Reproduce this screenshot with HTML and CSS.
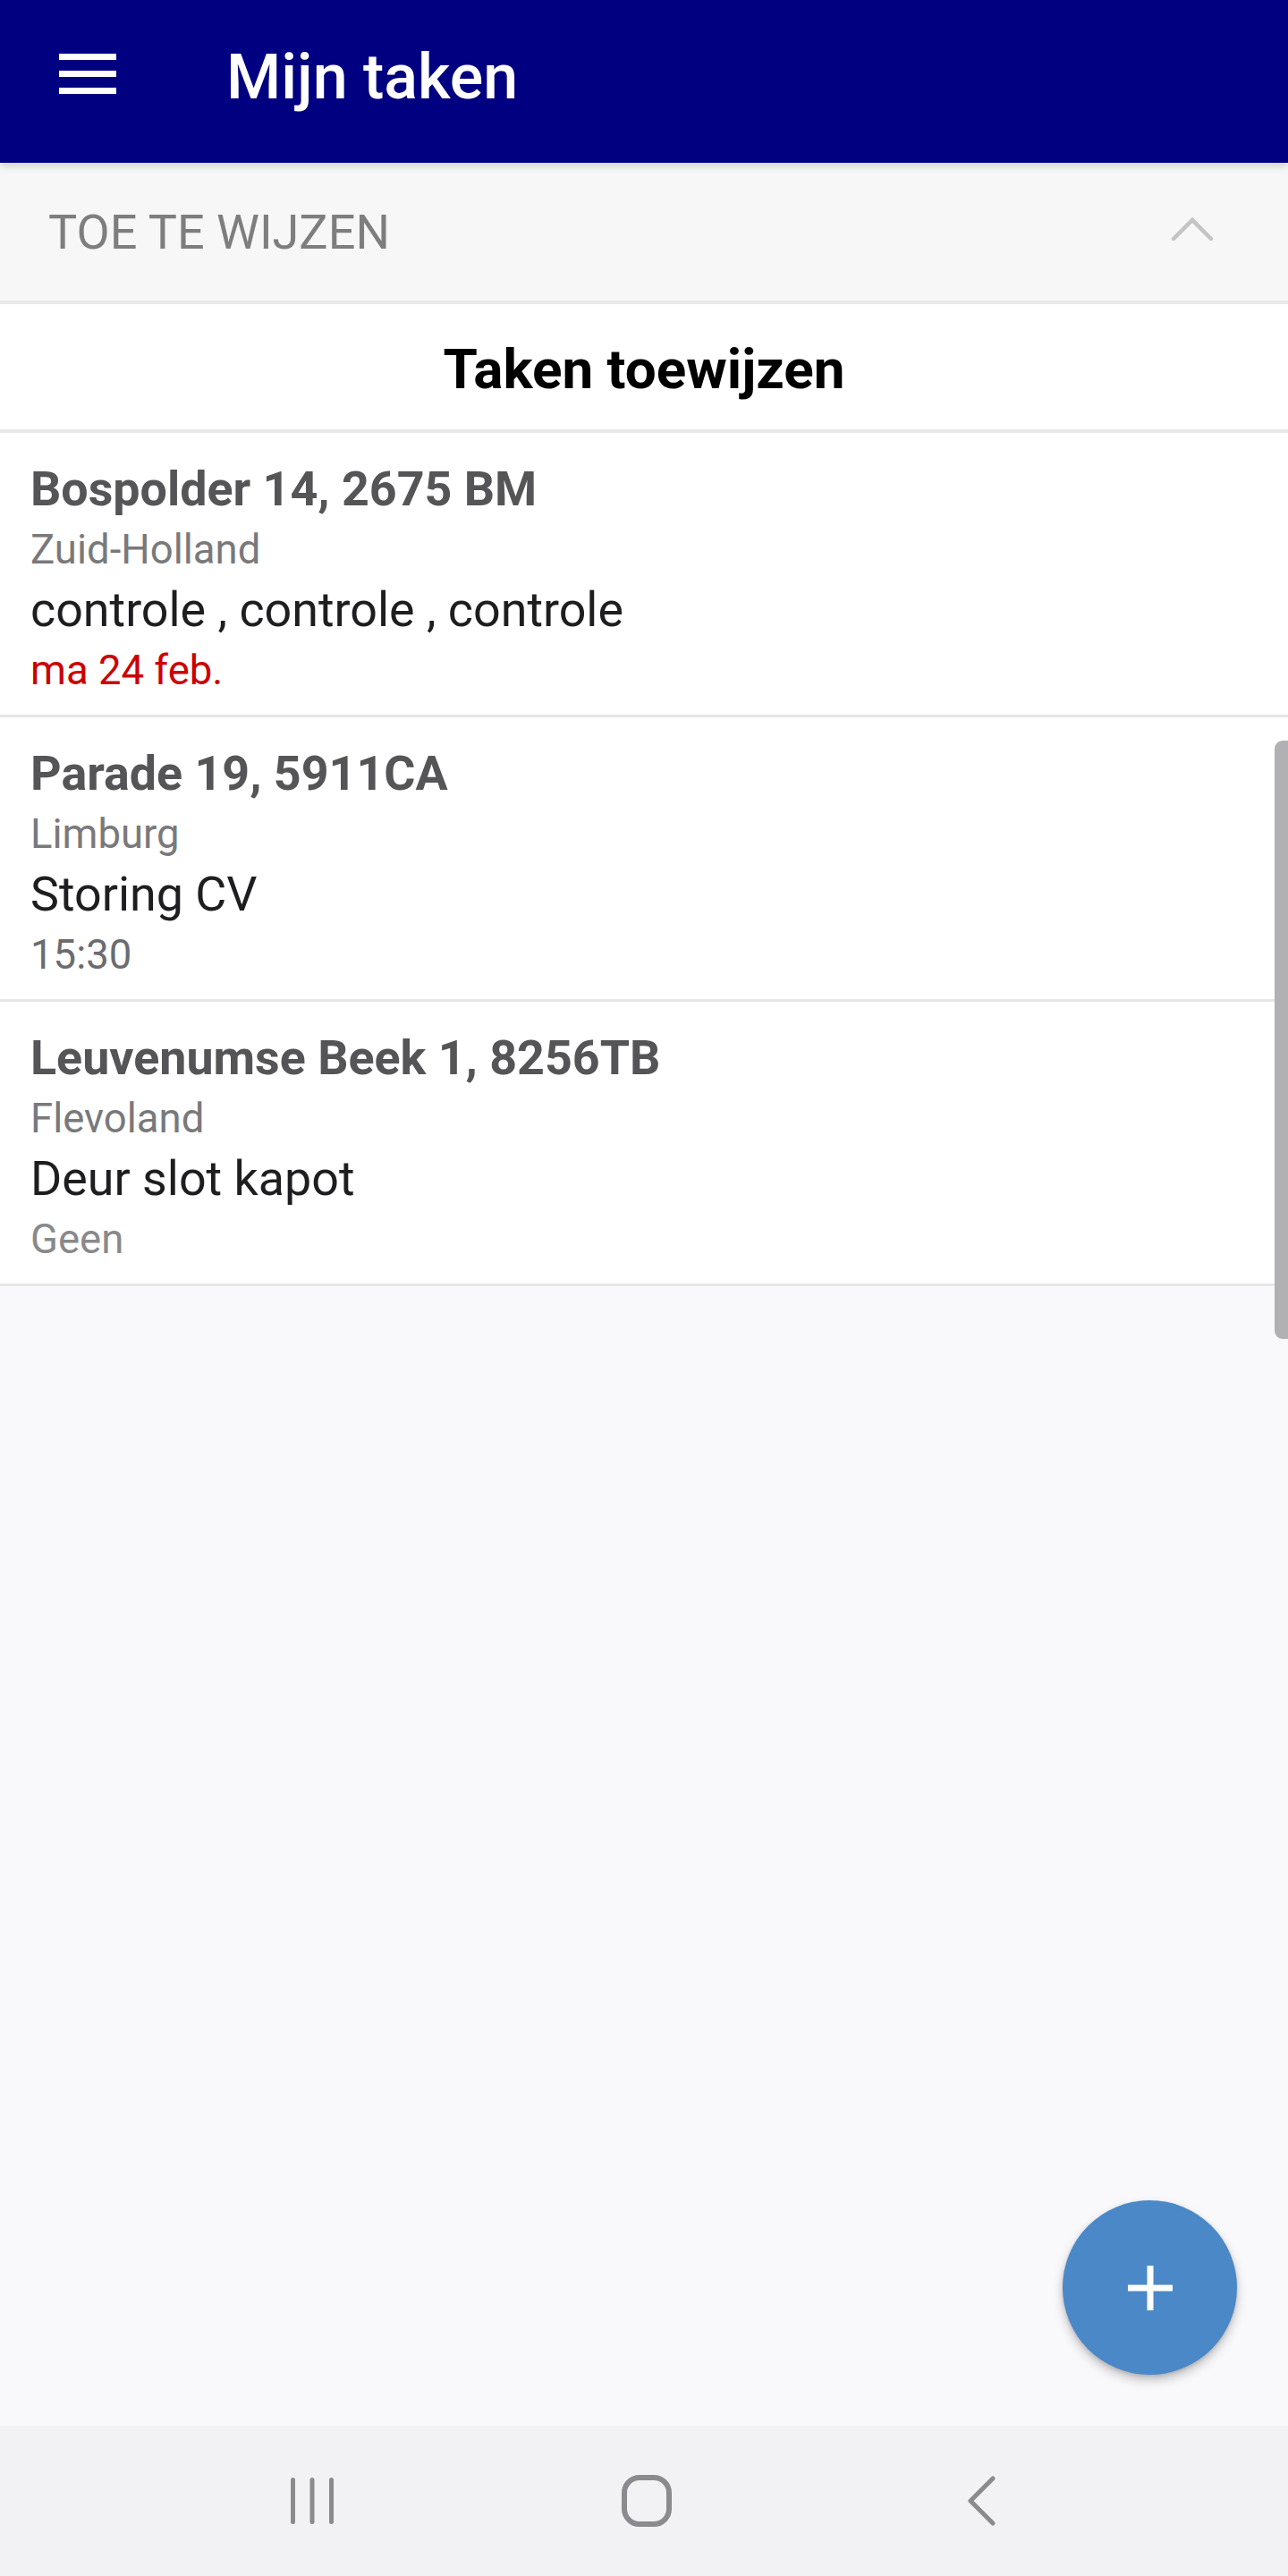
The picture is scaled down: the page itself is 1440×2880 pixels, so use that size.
FILE: index.html
```html
<!DOCTYPE html>
<html lang="nl">
<head>
<meta charset="utf-8">
<title>Mijn taken</title>
<link rel="stylesheet" href="styles.css">
</head>
<body>
<div class="screen">
  <header class="appbar">
    <svg class="menu-icon" width="64" height="45" viewBox="0 0 64 45" aria-hidden="true">
      <rect x="0" y="0" width="64" height="7" fill="#fff"/>
      <rect x="0" y="19" width="64" height="7" fill="#fff"/>
      <rect x="0" y="38" width="64" height="7" fill="#fff"/>
    </svg>
    <h1 class="appbar-title">Mijn taken</h1>
  </header>

  <div class="section-head">
    <span class="section-label">TOE TE WIJZEN</span>
    <svg class="chevron-up" width="50" height="28" viewBox="0 0 50 28" aria-hidden="true">
      <path d="M4 25 L25 4 L46 25" fill="none" stroke="#c4c4c4" stroke-width="4.5" stroke-linecap="round" stroke-linejoin="miter"/>
    </svg>
  </div>

  <div class="assign-title">Taken toewijzen</div>

  <ul class="task-list">
    <li class="task">
      <div class="task-address">Bospolder 14, 2675 BM</div>
      <div class="task-region">Zuid-Holland</div>
      <div class="task-desc">controle , controle , controle</div>
      <div class="task-when task-when-late">ma 24 feb.</div>
    </li>
    <li class="task">
      <div class="task-address">Parade 19, 5911CA</div>
      <div class="task-region">Limburg</div>
      <div class="task-desc">Storing CV</div>
      <div class="task-when">15:30</div>
    </li>
    <li class="task">
      <div class="task-address">Leuvenumse Beek 1, 8256TB</div>
      <div class="task-region">Flevoland</div>
      <div class="task-desc">Deur slot kapot</div>
      <div class="task-when task-when-none">Geen</div>
    </li>
  </ul>

  <div class="spacer"></div>

  <nav class="navbar">
    <div class="nav-cell">
      <svg width="50" height="54" viewBox="0 0 50 54" aria-hidden="true">
        <rect x="1" y="1" width="5" height="52" rx="2.5" fill="#8b8b8f"/>
        <rect x="22.5" y="1" width="5" height="52" rx="2.5" fill="#8b8b8f"/>
        <rect x="44" y="1" width="5" height="52" rx="2.5" fill="#8b8b8f"/>
      </svg>
    </div>
    <div class="nav-cell">
      <svg width="60" height="60" viewBox="0 0 60 60" aria-hidden="true">
        <rect x="5" y="4" width="50" height="52" rx="17" fill="none" stroke="#8b8b8f" stroke-width="6"/>
      </svg>
    </div>
    <div class="nav-cell">
      <svg width="36" height="58" viewBox="0 0 36 58" aria-hidden="true">
        <path d="M31 4 L6 29 L31 54" fill="none" stroke="#8b8b8f" stroke-width="5" stroke-linecap="round" stroke-linejoin="round"/>
      </svg>
    </div>
  </nav>

  <div class="scrollbar"></div>

  <button class="fab" aria-label="Nieuwe taak">
    <svg width="50" height="50" viewBox="0 0 50 50" aria-hidden="true">
      <rect x="0" y="21.5" width="50" height="7" fill="#fff"/>
      <rect x="21.5" y="0" width="7" height="50" fill="#fff"/>
    </svg>
  </button>
</div>
</body>
</html>
```

FILE: styles.css
```css
* {
  box-sizing: border-box;
}

html, body {
  margin: 0;
  padding: 0;
}

body {
  width: 1440px;
  height: 2880px;
  background: #f9f8fb;
  font-family: Roboto, "Noto Sans", "Liberation Sans", sans-serif;
  overflow: hidden;
}

.screen {
  position: relative;
  width: 1440px;
  height: 2880px;
  display: flex;
  flex-direction: column;
}

.appbar {
  position: relative;
  z-index: 2;
  height: 182px;
  flex: 0 0 182px;
  background: #000080;
  display: flex;
  align-items: center;
  padding-bottom: 10px;
  box-shadow: 0 3px 9px rgba(0, 0, 0, 0.18);
}

.menu-icon {
  display: block;
  margin-left: 66px;
  margin-bottom: 7px;
}

.appbar-title {
  margin: 0 0 0 123px;
  color: #ffffff;
  font-size: 70px;
  font-weight: 500;
  line-height: 82px;
}

.section-head {
  flex: 0 0 158px;
  height: 158px;
  background: #f7f7f7;
  border-bottom: 4px solid #e8e8e9;
  display: flex;
  align-items: center;
  justify-content: space-between;
  padding: 0 82px 0 54px;
}

.section-label {
  color: #7e7e7e;
  font-size: 54px;
  font-weight: 400;
  line-height: 62px;
  margin-top: 2px;
}

.chevron-up {
  display: block;
  margin-bottom: 6px;
}

.assign-title {
  flex: 0 0 144px;
  height: 144px;
  background: #ffffff;
  border-bottom: 4px solid #e8e8e9;
  display: flex;
  align-items: center;
  justify-content: center;
  color: #000000;
  font-size: 62px;
  font-weight: 700;
  padding-top: 4px;
}

.task-list {
  list-style: none;
  margin: 0;
  padding: 0;
}

.task {
  height: 318px;
  background: #ffffff;
  border-bottom: 3px solid #e6e6e8;
  padding: 29px 34px 16px 34px;
}

.task > div {
  line-height: 67.5px;
  white-space: nowrap;
}

.task-address {
  color: #555557;
  font-size: 53.8px;
  font-weight: 700;
}

.task-region {
  color: #79797b;
  font-size: 45.5px;
}

.task-desc {
  color: #1e1e20;
  font-size: 53.8px;
}

.task-when {
  color: #6c6c6e;
  font-size: 45.5px;
}

.task-when-late {
  color: #cc0000;
}

.task-when-none {
  color: #89898b;
}

.spacer {
  flex: 1 1 auto;
}

.navbar {
  flex: 0 0 168px;
  height: 168px;
  background: #f2f1f4;
  display: flex;
  align-items: center;
  padding-left: 162px;
}

.nav-cell {
  width: 374px;
  display: flex;
  justify-content: center;
  align-items: center;
}

.nav-cell svg {
  display: block;
}

.scrollbar {
  position: absolute;
  left: 1425px;
  top: 828px;
  width: 15px;
  height: 669px;
  background: #b1b0b3;
  border-radius: 9px 0 0 9px;
}

.fab {
  position: absolute;
  left: 1188px;
  top: 2460px;
  width: 195px;
  height: 195px;
  border: none;
  border-radius: 50%;
  background: #4a88c8;
  display: flex;
  align-items: center;
  justify-content: center;
  padding: 0;
  box-shadow: 0 6px 12px rgba(0, 0, 0, 0.22), 0 2px 4px rgba(0, 0, 0, 0.12);
}

.fab svg {
  display: block;
}
```
